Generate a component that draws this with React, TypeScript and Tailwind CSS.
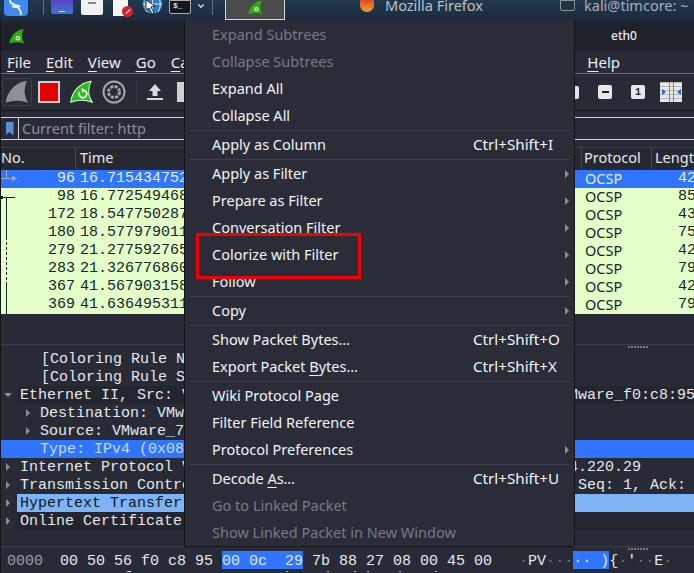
import { ChevronDown } from "lucide-react";

const sans = "font-['Noto_Sans','Open_Sans',sans-serif]";
const mono = "font-['Liberation_Mono',monospace]";

// "_" in a label marks the mnemonic letter
type MenuItem = { label: string; key?: string; off?: boolean; sub?: boolean } | "sep";

const menu: MenuItem[] = [
  { label: "Expand Subtrees", off: true },
  { label: "Collapse Subtrees", off: true },
  { label: "Expand All" },
  { label: "Collapse All" },
  "sep",
  { label: "Apply as Column", key: "Ctrl+Shift+I" },
  "sep",
  { label: "Apply as Filter", sub: true },
  { label: "Prepare as Filter", sub: true },
  { label: "Conversation Filter", sub: true },
  { label: "Colorize with Filter", sub: true },
  { label: "Follow", sub: true },
  "sep",
  { label: "Copy", sub: true },
  "sep",
  { label: "Show Packet Bytes…", key: "Ctrl+Shift+O" },
  { label: "Export Packet _Bytes…", key: "Ctrl+Shift+X" },
  "sep",
  { label: "Wiki Protocol Page" },
  { label: "Filter Field Reference" },
  { label: "Protocol Preferences", sub: true },
  "sep",
  { label: "Decode _As…", key: "Ctrl+Shift+U" },
  { label: "Go to Linked Packet", off: true },
  { label: "Show Linked Packet in New Window", off: true },
];

const packets = [
  ["96", "16.715434752", "42"],
  ["98", "16.772549468", "85"],
  ["172", "18.547750287", "43"],
  ["180", "18.577979011", "75"],
  ["279", "21.277592765", "42"],
  ["283", "21.326776860", "79"],
  ["367", "41.567903158", "42"],
  ["369", "41.636495311", "79"],
];

const details = [
  { text: "[Coloring Rule Name: HTTP]", pad: "pl-[40px]" },
  { text: "[Coloring Rule String: http || tcp.port == 80 || http2]", pad: "pl-[40px]" },
  { text: "Ethernet II, Src: VMware_7b:88:27 (00:0c:29:7b:88:27), Dst: VMware_f0:c8:95", pad: "pl-[3px] ml-[16px] bg-[#23252f]" },
  { text: "Destination: VMware_f0:c8:95 (00:50:56:f0:c8:95)", pad: "pl-[39px]" },
  { text: "Source: VMware_7b:88:27 (00:0c:29:7b:88:27)", pad: "pl-[39px]" },
  { text: "Type: IPv4 (0x0800)", pad: "pl-[39px] bg-[#2f75ff] text-[#c8dcff]" },
  { text: "Internet Protocol Version 4, Src: 192.168.119.130, Dst: 93.184.220.29", pad: "pl-[19px]" },
  { text: "Transmission Control Protocol, Src Port: 80, Dst Port: 49872, Seq: 1, Ack: 1, Len: 0", pad: "pl-[19px]" },
  { text: "Hypertext Transfer Protocol", pad: "pl-[3px] ml-[16px] bg-[#7cb4f5] text-[#10151c]" },
  { text: "Online Certificate Status Protocol", pad: "pl-[3px] ml-[16px] bg-[#23252f]" },
];

function Fin({ className, fill = "#2fae12", dot = true }: { className: string; fill?: string; dot?: boolean }) {
  return (
    <svg viewBox="0 0 18 18" className={className}>
      <path d="M0.5 17 C1.5 9 7 2 16.5 0.5 C14 6 14 12 17.5 17 C12 15 6 15 0.5 17 Z" fill={fill} />
      {dot && <circle cx="10" cy="11" r="2.6" fill="#dfe8d8" />}
      {dot && <circle cx="10" cy="11" r="1.2" fill="#5d8a4a" />}
    </svg>
  );
}

function Splitter() {
  return (
    <div className="flex h-[5px] shrink-0 items-center justify-end border-t border-[#3b3e4a] pr-[46px]">
      <div className="h-[2px] w-[20px] bg-[repeating-linear-gradient(90deg,#777a85_0,#777a85_2px,transparent_2px,transparent_3px)]" />
    </div>
  );
}

function Mnemonic({ c, rest }: { c: string; rest: string }) {
  return (
    <span>
      <span className="underline underline-offset-[3px]">{c}</span>
      {rest}
    </span>
  );
}

function MenuLabel({ label }: { label: string }) {
  const at = label.indexOf("_");
  if (at < 0) return <span>{label}</span>;
  return (
    <span>
      {label.slice(0, at)}
      <Mnemonic c={label[at + 1]} rest={label.slice(at + 2)} />
    </span>
  );
}

function Taskbar() {
  return (
    <div className={`flex h-[21px] shrink-0 items-start overflow-hidden bg-gradient-to-b from-[#21384f] to-[#1c2b3c] ${sans}`}>
      <div className="ml-[4px] h-[16px] w-[24px] shrink-0 rounded-b-[4px] bg-[#3d8bf2]">
        <svg viewBox="0 0 24 16" className="h-full w-full">
          <path d="M6 0 C5 4 12 5 15 6 C18 7 11 8 8 6 M13 7 C16 9 17 11 17 15" stroke="white" strokeWidth="1.6" fill="none" />
        </svg>
      </div>
      <div className="ml-[15px] h-[15px] w-px shrink-0 bg-[#68727f]" />
      <div className="ml-[7px] flex h-[14px] w-[22px] shrink-0 items-end justify-center rounded-b-[2px] bg-gradient-to-b from-[#5a43c4] to-[#3f74d6] pb-[2px]">
        <div className="h-px w-[6px] bg-white/80" />
      </div>
      <div className="ml-[8px] flex h-[15px] w-[22px] shrink-0 justify-center rounded-b-[2px] bg-[#f2f2f2] pt-[2px]">
        <div className="h-[2px] w-[8px] bg-[#8a8a8a]" />
      </div>
      <div className="relative ml-[10px] h-[16px] w-[15px] shrink-0 bg-[#f4f4f4]">
        <div className="absolute left-[9px] top-[6px] flex h-[11px] w-[11px] items-center justify-center rounded-full bg-[#d8202a]">
          <div className="h-px w-[6px] -rotate-45 bg-white" />
        </div>
      </div>
      <svg viewBox="0 0 21 15" className="ml-[14px] h-[15px] w-[21px] shrink-0">
        <circle cx="10.5" cy="4" r="10" fill="#2f7fc4" />
        <path d="M1 4h19M10.5 -6v20M5 -4c-3 6-3 11 0 16M16 -4c3 6 3 11 0 16" stroke="#d8e8f5" strokeWidth="1" fill="none" />
        <path d="M4 0 L4 10 L7 8 L10 14 L12 13 L9 7 L13 6 Z" fill="white" stroke="black" strokeWidth="0.8" />
      </svg>
      <div className={`ml-[6px] h-[14px] w-[22px] shrink-0 rounded-b-[2px] border border-[#aaa] bg-[#14161c] pl-[3px] text-[8px] leading-[9px] text-white ${mono}`}>$_</div>
      <ChevronDown className="ml-[5px] mt-[1px] h-[10px] w-[10px] shrink-0 text-[#d7dce2]" strokeWidth={3} />
      <div className="ml-[6px] h-[15px] w-px shrink-0 bg-[#68727f]" />
      <div className="ml-[12px] flex h-[20px] w-[60px] shrink-0 justify-center border border-t-0 border-[#d8d8d8] bg-[#4b4b4b]">
        <Fin className="h-[15px] w-[15px]" />
      </div>
      <div className="ml-[75px] flex h-[20px] w-[200px] shrink-0 items-start gap-[11px] text-[14.5px] leading-[10px] text-[#b9c0c8]">
        <div className="h-[12px] w-[14px] rounded-b-full bg-gradient-to-b from-[#e0452a] to-[#f0a02a]" />
        <span>Mozilla Firefox</span>
      </div>
      <div className="flex shrink-0 items-start gap-[9px] text-[14.5px] leading-[10px] text-[#a7afb8]">
        <div className="h-[11px] w-[15px] rounded-b-[2px] border border-[#8a929b] bg-[#253241]" />
        <span className="whitespace-pre">kali@timcore: ~</span>
      </div>
    </div>
  );
}

function Toolbar() {
  return (
    <div className="flex h-[38px] shrink-0 items-center border-t border-b border-[#6a6c74] border-b-[#14161c]">
      <div className="ml-px flex h-[28px] w-[30px] items-center justify-center rounded-[3px] border border-[#3c3f4a]">
        <Fin className="h-[24px] w-[24px]" fill="#8d9095" dot={false} />
      </div>
      <div className="ml-[6px] h-[22px] w-[22px] border-[2px] border-[#cfcfcf] bg-[#e00000]" />
      <div className="relative ml-[10px] h-[24px] w-[23px]">
        <svg viewBox="0 0 18 18" className="h-[24px] w-[23px]">
          <path d="M0.5 17 C1.5 9 7 2 16.5 0.5 C14 6 14 12 17.5 17 C12 15 6 15 0.5 17 Z" fill="#22c016" stroke="#e8f0e4" strokeWidth="0.8" />
          <path d="M7.5 9 A3 3 0 1 0 10.5 7.5" fill="none" stroke="white" strokeWidth="1.4" />
          <path d="M9 5.8 L12 7.5 L9.5 9.8 Z" fill="white" />
        </svg>
      </div>
      <svg viewBox="0 0 24 24" className="ml-[9px] h-[24px] w-[24px]" fill="none" stroke="#a3a6ab">
        <circle cx="12" cy="12" r="10.5" strokeWidth="2" />
        <circle cx="12" cy="12" r="5.5" strokeWidth="3" strokeDasharray="3 1.3" />
      </svg>
      <div className="ml-[10px] h-[24px] w-px bg-[#33363f]" />
      <svg viewBox="0 0 16 18" className="ml-[10px] h-[18px] w-[16px]" fill="#d8d8d8">
        <path d="M8 1 L14 8 H10.5 V13 H5.5 V8 H2 Z" />
        <rect x="0" y="15" width="16" height="2" />
      </svg>
      <div className="ml-[14px] h-[20px] w-[8px] bg-[#cfd0d2]" />
      <div className="ml-auto mr-[115px] h-[13px] w-[4px] rounded-r-[2px] bg-[#e4e4e4]" />
      <div className="absolute left-[597px] flex h-[14px] w-[14px] items-center justify-center rounded-[2px] bg-[#e8e8e8]">
        <div className="h-[2px] w-[7px] bg-[#222]" />
      </div>
      <div className={`absolute left-[630px] flex h-[14px] w-[14px] items-center justify-center rounded-[2px] bg-[#e8e8e8] text-[10px] font-bold text-[#222] ${mono}`}>1</div>
      <div className="absolute left-[659px] flex h-[20px] w-[22px] items-center justify-center gap-[3px] bg-[repeating-linear-gradient(0deg,#e8e8e8_0,#e8e8e8_3px,#b8b8b8_3px,#b8b8b8_4px)]">
        <div className="h-0 w-0 border-y-[3px] border-l-[4px] border-y-transparent border-l-[#2f68b0]" />
        <div className="h-[20px] w-px bg-[#888]" />
        <div className="h-[20px] w-px bg-[#888]" />
        <div className="h-0 w-0 border-y-[3px] border-r-[4px] border-y-transparent border-r-[#2f68b0]" />
      </div>
    </div>
  );
}

function PacketList() {
  return (
    <div className="relative">
      <div className={`flex h-[23px] items-center border-t border-[#3b3e4a] bg-[#262932] pb-[2px] text-[14.5px] text-[#e6e8ec] ${sans}`}>
        <div className="w-[75px] border-r border-[#444752]">No.</div>
        <div className="flex-1 pl-[4px]">Time</div>
        <div className="w-[71px] border-x border-[#444752] pl-[2px]">Protocol</div>
        <div className="w-[42px] overflow-hidden whitespace-nowrap pl-[3px]">Length</div>
      </div>
      {packets.map((p, i) => (
        <div
          key={p[0]}
          className={`flex h-[18px] items-center text-[15px] leading-[18px] ${mono} ${i === 0 ? "bg-[#2f75ff] text-[#e6efff]" : "bg-[#e4ffc7] text-[#12272e]"}`}
        >
          <div className="w-[74px] text-right">{p[0]}</div>
          <div className="ml-[5px] flex-1 overflow-hidden whitespace-nowrap">{p[1]}</div>
          <div className={`w-[94px] pb-[3px] pl-[1px] text-[14.5px] ${sans}`}>OCSP</div>
          <div className="w-[16px] overflow-hidden whitespace-nowrap">{p[2]}</div>
        </div>
      ))}
      {/* related packet marks */}
      <svg className="absolute left-0 top-[23px] h-[144px] w-[20px]" viewBox="0 0 20 144" fill="none">
        <path d="M0 8.5h11" stroke="#9aa8c0" />
        <path d="M5.5 0v8" stroke="#9aa8c0" />
        <path d="M11 5.5l5 3-5 3z" fill="#9aa8c0" />
        <path d="M0 27.5h14" stroke="#12272e" />
        <path d="M0 26h2v3h-2z" fill="#12272e" />
        <path d="M5.5 27v40" stroke="#12272e" />
        <path d="M5.5 67v46" stroke="#12272e" strokeDasharray="3 2" />
        <path d="M5.5 113v31" stroke="#12272e" />
      </svg>
    </div>
  );
}

function Details() {
  return (
    <div className={`h-[197px] shrink-0 overflow-hidden pt-[1px] text-[15px] leading-[20px] text-[#e4e7eb] ${mono}`}>
      {details.map((d) => (
        <div key={d.text} className={`h-[18px] overflow-hidden whitespace-nowrap ${d.pad}`}>
          {d.text}
        </div>
      ))}
    </div>
  );
}

function Arrows() {
  return (
    <svg className="absolute left-0 top-[329px] h-[180px] w-[32px]" viewBox="0 0 32 180" fill="#8b8e96">
      <path d="M3 43h8l-4 4z" />
      <path d="M25 59v8l4-4zM25 77v8l4-4z" />
      <path d="M5 113v8l4-4zM5 131v8l4-4zM5 149v8l4-4zM5 167v8l4-4z" />
    </svg>
  );
}

function Bytes() {
  const dot = <span className="text-[#6f727c]">·</span>;
  const sel = "inline-block h-[18px] bg-[#2f75ff] text-[#dfe9ff]";
  return (
    <div className={`h-[21px] shrink-0 overflow-hidden text-[15px] leading-[21px] text-[#e4e7eb] ${mono}`}>
      <div className="flex h-[18px] whitespace-pre">
        <div className="w-[50px] pl-[6px] text-[#9a9da5]">0000</div>
        <div className="pl-[9px]">
          00 50 56 f0 c8 95 <span className={sel}>00 0c  29</span> 7b 88 27 08 00 45 00
        </div>
        <div className="pl-[27px]">
          {dot}PV{dot}{dot}{dot}
          <span className={sel}>·· )</span>
          {"{"}{dot}'{dot}{dot}E{dot}
        </div>
      </div>
      <div className="-mt-[1px] flex h-[18px] whitespace-pre">
        <div className="w-[50px] pl-[6px] text-[#9a9da5]">0010</div>
        <div className="pl-[9px]">06 7e 8f 4a 40 00 80 06  b4 1d 5d b8 dc 1d c0 a8</div>
      </div>
    </div>
  );
}

function ContextMenu() {
  return (
    <div className={`absolute left-[184px] top-[20px] w-[391px] border border-t-0 border-[#15171d] bg-[#2a2d38] pt-[1px] text-[14.5px] text-[#f1f3f5] ${sans}`}>
      {menu.map((m, i) =>
        m === "sep" ? (
          <div key={i} className="mx-[4px] h-[2px] border-b border-[#3d404c]" />
        ) : (
          <div key={m.label} className={`relative flex h-[27px] items-center pl-[27px] ${m.off ? "text-[#767a84]" : ""}`}>
            <MenuLabel label={m.label} />
            {m.key && <span className="absolute left-[288px] text-[15.2px]">{m.key}</span>}
            {m.sub && <div className="absolute right-[5px] h-0 w-0 border-y-[4px] border-l-[4px] border-y-transparent border-l-[#8b8e96]" />}
          </div>
        ),
      )}
    </div>
  );
}

export default function App() {
  return (
    <div className="relative flex h-[573px] w-[694px] flex-col overflow-hidden bg-[#282b36]">
      <Taskbar />
      <div className="relative flex flex-1 flex-col overflow-hidden border-l border-[#14161c]">
        <div className={`flex h-[30px] shrink-0 items-center bg-[#20222b] pl-[8px] ${sans}`}>
          <Fin className="h-[17px] w-[16px]" />
          <span className="ml-[586px] text-[12px] font-medium text-[#eceef0]">eth0</span>
        </div>
        <div className={`flex h-[22px] shrink-0 items-center gap-[15px] pl-[6px] text-[15px] text-[#eceef0] ${sans}`}>
          <Mnemonic c="F" rest="ile" />
          <Mnemonic c="E" rest="dit" />
          <Mnemonic c="V" rest="iew" />
          <Mnemonic c="G" rest="o" />
          <Mnemonic c="C" rest="apture" />
          <div className="ml-auto mr-[74px]">
            <Mnemonic c="H" rest="elp" />
          </div>
        </div>
        <Toolbar />
        <div className="mt-[6px] flex h-[23px] shrink-0 border-y border-[#d0d2d6]">
          <div className="flex w-[18px] items-center justify-center border-r border-[#d0d2d6]">
            <div className="h-[14px] w-[8px] bg-[#5b8fd0] [clip-path:polygon(0_0,100%_0,100%_100%,50%_75%,0_100%)]" />
          </div>
          <div className={`pl-[3px] text-[14.5px] leading-[21px] text-[#8c8f97] ${sans}`}>Current filter: http</div>
        </div>
        <div className="mt-[7px] shrink-0">
          <PacketList />
        </div>
        <div className="h-[30px] shrink-0" />
        <Splitter />
        <Details />
        <Splitter />
        <Bytes />
        <Arrows />
      </div>
      <ContextMenu />
      {/* red highlight drawn on the screenshot */}
      <div className="absolute left-[196px] top-[233px] h-[46px] w-[165px] border-[3px] border-[#f00000]" />
    </div>
  );
}
